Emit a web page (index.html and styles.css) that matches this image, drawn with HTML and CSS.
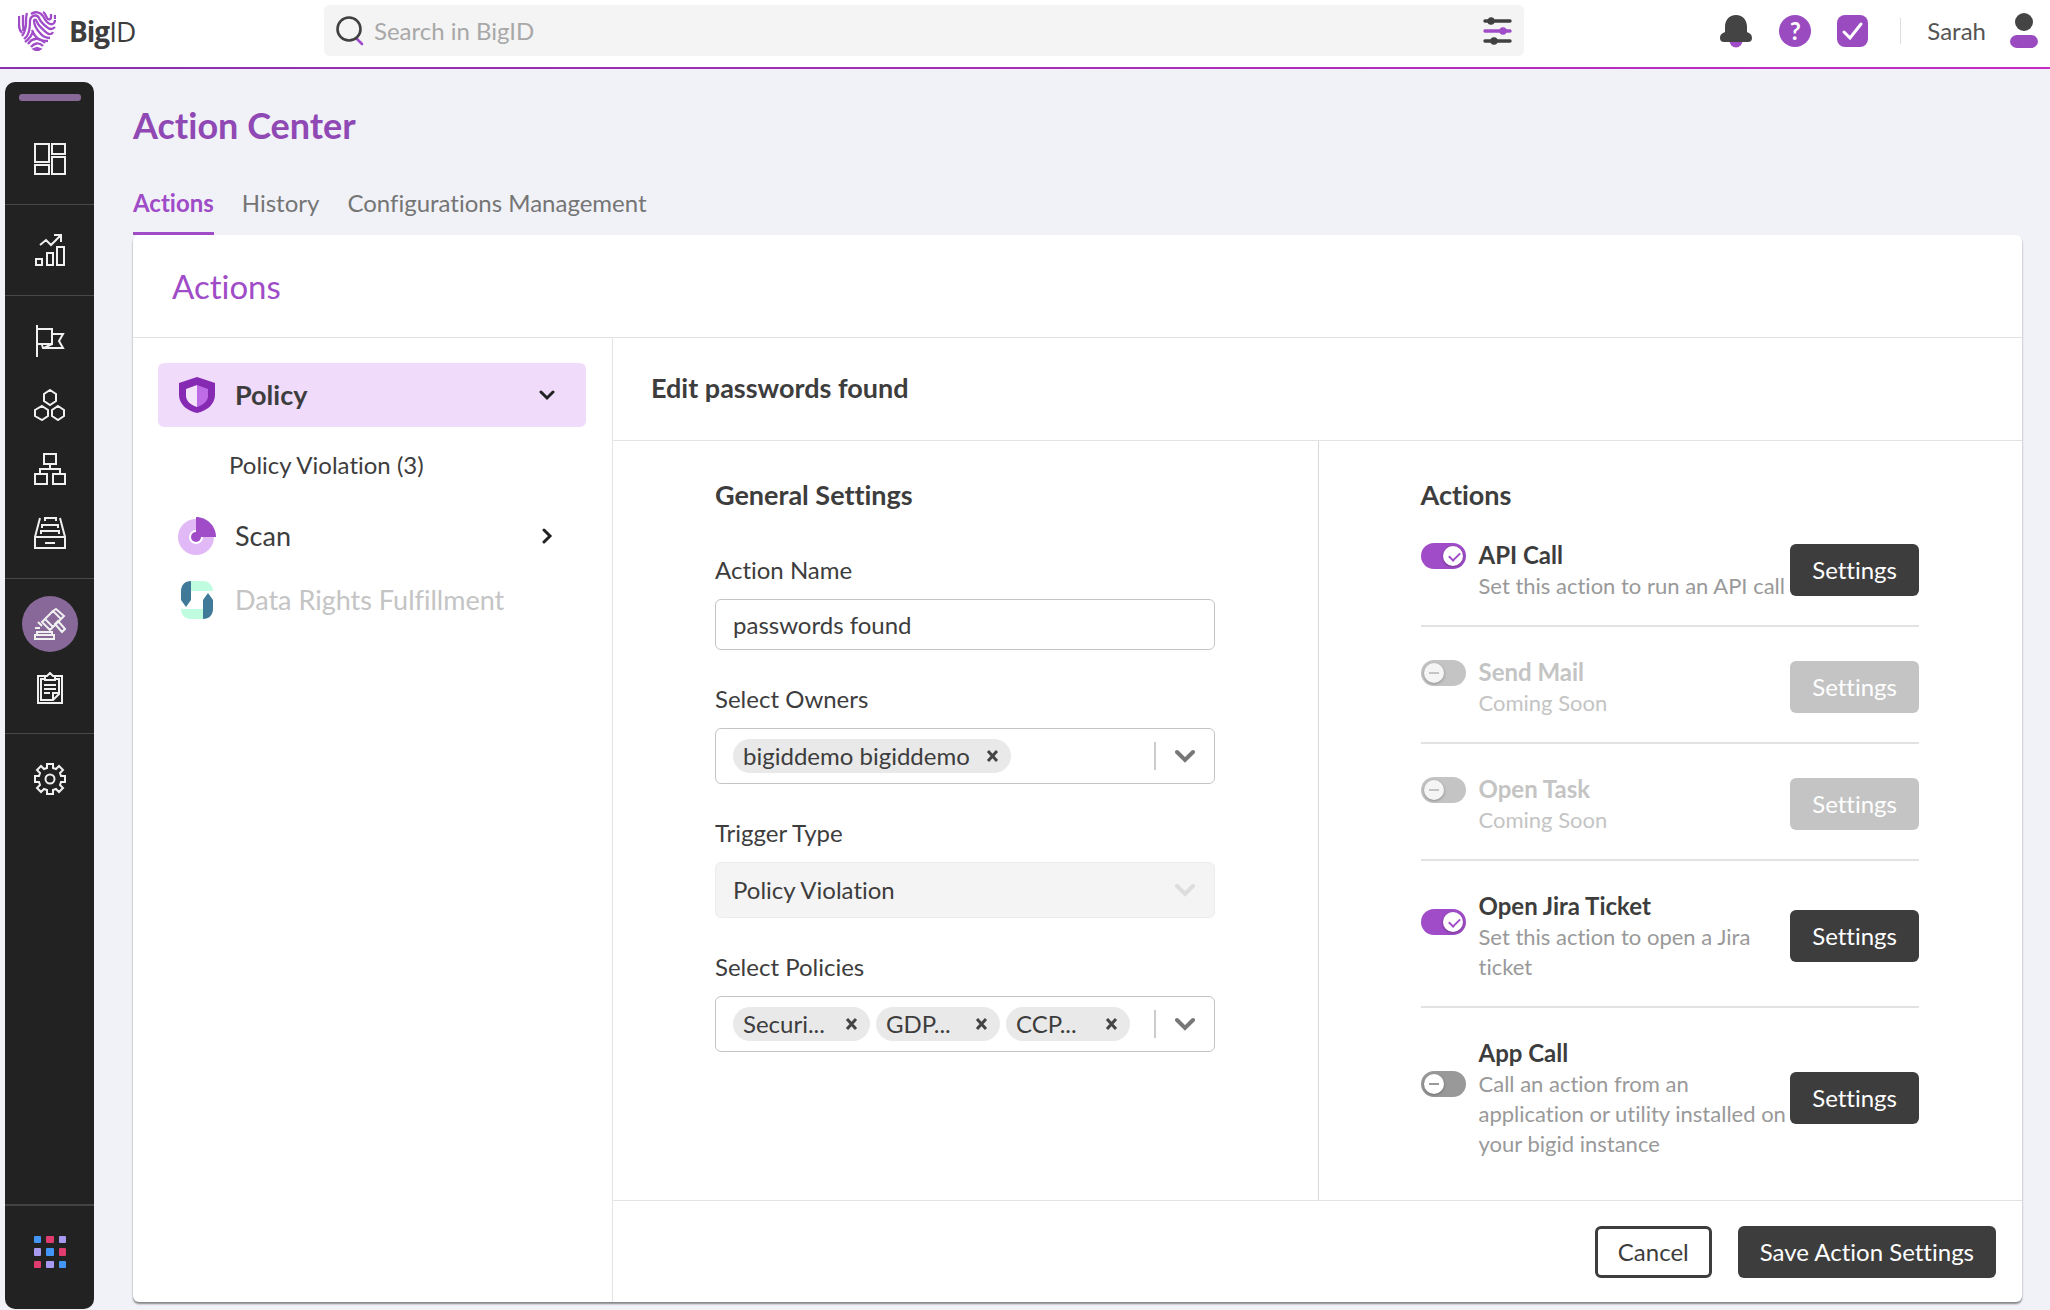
FILE: index.html
```html
<!DOCTYPE html>
<html lang="en">

<head>
    <meta charset="UTF-8">
    <meta name="viewport" content="width=device-width, initial-scale=1.0">
    <title>BigID - Action Center</title>
    <link rel="stylesheet" href="styles.css">
</head>

<body>
<header class="topbar">
    <a class="logo" href="#" aria-label="BigID">
        <svg width="38" height="40" viewBox="0 0 38 40" fill="none" stroke="#a04cc8" stroke-width="2.3">
            <path d="M1 5v9c0 3 1 6 3 8"/>
            <path d="M5 4v9c0 3 1 4 0 7M9 2c-1 3-1 7-1 10 0 5-1 9-4 13"/>
            <path d="M12 9c1-5 7-6 9-2 2 5 5 7 9 10 3 2 5 1 7-1"/>
            <path d="M12 9c0 5 0 10-2 14-1 3-3 4-4 5"/>
            <path d="M13 3c4-3 9-2 12 2 2 4 4 7 7 8 3 1 5-1 5-4"/>
            <path d="M25 1c2 1 3 4 4 6 1 2 4 2 4-1V3M37 4v4"/>
            <path d="M16 11c0-3 2-3 3 0 2 5 7 8 10 11 3 2 5 1 6-1"/>
            <path d="M16 11c1 5 3 8 6 11 3 4 6 5 10 5"/>
            <path d="M14 19c2 5 5 9 9 10 3 1 5 1 7 1M15 20c-1 5-4 8-8 11"/>
            <path d="M10 33c4-6 10-7 17-1M13 36c3-4 8-5 12-1"/>
            <path d="M16 38l3-1 3 1-3 2z" fill="#a04cc8"/>
        </svg>
        <span class="logo-text"><b>Big</b>ID</span>
    </a>
    <div class="search">
        <svg width="28" height="34" viewBox="0 0 28 34" fill="none" stroke-width="2.6" stroke-linecap="round">
            <path d="M20 24l6 6" stroke="#a04cc8"/>
            <circle cx="13" cy="15" r="11.5" stroke="#404040"/>
        </svg>
        <input type="search" placeholder="Search in BigID" aria-label="Search in BigID">
        <button class="icon-btn" aria-label="Filters">
            <svg width="30" height="28" viewBox="0 0 30 28" stroke-width="3.4" stroke-linecap="round">
                <g stroke="#404040" fill="#404040"><path d="M2 4h25M2 24h25"/><circle cx="8" cy="4" r="2"/><circle cx="11" cy="24" r="2"/></g>
                <g stroke="#a04cc8" fill="#a04cc8"><path d="M2 14h25"/><circle cx="20" cy="14" r="2"/></g>
            </svg>
        </button>
    </div>
    <div class="user-area">
        <button class="icon-btn" aria-label="Notifications">
            <svg width="34" height="34" viewBox="0 0 34 34">
                <circle cx="17" cy="27" r="6.5" fill="#a04cc8"/>
                <path d="M17 1c7 0 11 5 11 12v5c2 1 5 2 5 6 0 3-2 4-4 4H5c-2 0-4-1-4-4 0-4 3-5 5-6v-5C6 6 10 1 17 1z" fill="#444"/>
            </svg>
        </button>
        <button class="icon-btn help" aria-label="Help">?</button>
        <button class="icon-btn" aria-label="Tasks">
            <svg width="31" height="32" viewBox="0 0 31 32">
                <rect width="31" height="32" rx="8" fill="#9a4bc0"/>
                <path d="M7 17l6 6L24 9" fill="none" stroke="#fff" stroke-width="3" stroke-linecap="round"/>
            </svg>
        </button>
        <span class="user-name">Sarah</span>
        <svg width="28" height="36" viewBox="0 0 28 36">
            <circle cx="14" cy="9" r="9" fill="#444"/>
            <rect y="22" width="28" height="13" rx="7" fill="#9a4bc0"/>
        </svg>
    </div>
</header>

<div class="page">
    <nav class="sidebar" aria-label="Main menu">
        <span class="handle"></span>
        <div class="nav-group">
            <a href="#" aria-label="Dashboard">
                <svg class="nav-icon" viewBox="0 0 32 32"><path d="M1 1h14v18H1zM18 1h13v10H18zM1 22h14v9H1zM18 14h13v17H18z"/></svg>
            </a>
        </div>
        <div class="nav-group">
            <a href="#" aria-label="Reports">
                <svg class="nav-icon" viewBox="0 0 32 32"><path d="M2 25h6v6H2zM13 19h6v12h-6zM23 13h7v18h-7zM6 11l6-5 5 5L27 1M20 1h7v7"/></svg>
            </a>
        </div>
        <div class="nav-group">
            <a href="#" aria-label="Flags">
                <svg class="nav-icon" viewBox="0 0 32 32"><path d="M3 0v32M3 4h15v15H3M18 9h11l-4 7 4 7H9l-1-3M18 19l-8 4"/></svg>
            </a>
            <a href="#" aria-label="Correlation">
                <svg class="nav-icon" viewBox="0 0 32 32"><path d="M16 1l6 4v7l-6 4-6-4V5zM8 17l6 4v6l-6 4-7-4v-6zM24 17l6 4v6l-6 4-6-4v-6z"/></svg>
            </a>
            <a href="#" aria-label="Data sources">
                <svg class="nav-icon" viewBox="0 0 32 32"><path d="M10 1h12v10H10zM1 21h12v10H1zM19 21h12v10H19zM16 11v5M6 21v-5h20v5"/></svg>
            </a>
            <a href="#" aria-label="Catalog">
                <svg class="nav-icon" viewBox="0 0 32 32"><path d="M6 1L1 20v11h30V20L26 1M1 20h30M11 26h10M11 4V1h11v3M8 11V8h16v3M7 17v-3h18v3"/></svg>
            </a>
        </div>
        <div class="nav-group">
            <a class="current" href="#" aria-label="Action Center">
                <svg class="nav-icon" viewBox="0 0 32 32"><path d="M1 27h19v4H1zM3 24h15v3H3zM19 3l3-2 8 7-3 3zM8 14l3-3 8 8-3 3zM11 11l8-8M19 19l8-8M21 16l3-3 7 8-3 3zM1 20h5M4 14l4 4"/></svg>
            </a>
            <a href="#" aria-label="Tasks list">
                <svg class="nav-icon" viewBox="0 0 32 32"><path d="M11 4H4v27h24V4h-7M11 7H7v21h12l6-6V7h-4M11 4h2l3-3 3 3h2v4H11zM10 13h12M10 17h12M10 21h6M19 27v-6h6"/></svg>
            </a>
        </div>
        <div class="nav-group last">
            <a href="#" aria-label="Settings">
                <svg class="nav-icon" viewBox="0 0 32 32"><path d="M13 1h6v4l3 1 3-3 4 4-3 3 1 3h4v6h-4l-1 3 3 3-4 4-3-3-3 1v4h-6v-4l-3-1-3 3-4-4 3-3-1-3H1v-6h4l1-3-3-3 4-4 3 3 3-1z"/><circle cx="16" cy="16" r="4.5"/></svg>
            </a>
        </div>
        <div class="nav-apps">
            <a href="#" aria-label="Apps">
                <svg width="32" height="32" viewBox="0 0 32 32">
                    <g fill="#4396f5"><rect width="7" height="7" rx="1"/><rect x="12" y="12" width="8" height="8" rx="1"/><rect x="25" y="25" width="7" height="7" rx="1"/></g>
                    <g fill="#e03c70"><rect x="12" width="8" height="7" rx="1"/><rect x="25" y="12" width="7" height="8" rx="1"/><rect y="25" width="7" height="7" rx="1"/></g>
                    <g fill="#a89af0"><rect x="25" width="7" height="7" rx="1"/><rect y="12" width="7" height="8" rx="1"/><rect x="12" y="25" width="8" height="7" rx="1"/></g>
                </svg>
            </a>
        </div>
    </nav>

    <main class="content">
        <h1>Action Center</h1>
        <nav class="tabs" aria-label="Sections">
            <a class="active" href="#">Actions</a>
            <a href="#">History</a>
            <a href="#">Configurations Management</a>
        </nav>

        <div class="card">
            <h2 class="card-title">Actions</h2>
            <div class="card-body">
                <aside class="triggers">
                    <button class="trigger open">
                        <svg width="38" height="36" viewBox="-1 0 38 36">
                            <path d="M18 0l18 6v12c0 9-8 16-18 18C8 34 0 27 0 18V6z" fill="#8629b3"/>
                            <path d="M18 8l-11 4v7c0 5 5 9 11 11z" fill="#f3e4fb"/>
                            <path d="M18 8l11 4v7c0 5-5 9-11 11z" fill="#bd6be6"/>
                        </svg>
                        <span>Policy</span>
                        <svg class="chevron" width="16" height="16" viewBox="0 0 16 16"><path d="M2 5l6 6 6-6"/></svg>
                    </button>
                    <a class="sub-trigger" href="#">Policy Violation (3)</a>
                    <button class="trigger">
                        <svg width="38" height="38" viewBox="0 0 38 38">
                            <circle cx="18" cy="20" r="18" fill="#e2b9f7"/>
                            <circle cx="18" cy="20" r="7" fill="#fff"/>
                            <path d="M18 0c11 0 20 9 20 20H18z" fill="#a04cc8"/>
                            <circle cx="18" cy="20" r="5" fill="#a04cc8"/>
                        </svg>
                        <span>Scan</span>
                        <svg class="chevron" width="16" height="16" viewBox="0 0 16 16"><path d="M5 2l6 6-6 6"/></svg>
                    </button>
                    <button class="trigger" disabled>
                        <svg width="38" height="38" viewBox="-2 0 38 38">
                            <path d="M11 0h12c6 0 10 5 10 10H11z" fill="#c0fce0"/>
                            <path d="M23 38H11C5 38 1 34 1 28h22z" fill="#c0fce0"/>
                            <path d="M11 0v19l-5 7-5-7V10C1 4 5 0 11 0z" fill="#407a98"/>
                            <path d="M23 38V19l5-7 5 7v9c0 6-4 10-10 10z" fill="#407a98"/>
                        </svg>
                        <span>Data Rights Fulfillment</span>
                    </button>
                </aside>

                <section class="editor">
                    <h3 class="editor-title">Edit passwords found</h3>
                    <div class="columns">
                        <form class="column" id="action-form">
                            <h3>General Settings</h3>
                            <div class="field first">
                                <label for="name">Action Name</label>
                                <input class="control" id="name" type="text" value="passwords found">
                            </div>
                            <div class="field">
                                <label for="owners">Select Owners</label>
                                <div class="control multi">
                                    <span class="chip wide">bigiddemo bigiddemo
                                        <button type="button" aria-label="Remove bigiddemo"><svg width="13" height="14" viewBox="0 0 13 14"><path d="M2 2l9 10M11 2L2 12"/></svg></button>
                                    </span>
                                    <button type="button" class="arrow" id="owners" aria-label="Select Owners">
                                        <svg width="20" height="14" viewBox="0 0 20 14"><path d="M2 3l8 8 8-8"/></svg>
                                    </button>
                                </div>
                            </div>
                            <div class="field">
                                <label for="trigger-type">Trigger Type</label>
                                <div class="select-wrap">
                                    <select class="control" id="trigger-type" disabled>
                                        <option>Policy Violation</option>
                                    </select>
                                    <svg width="20" height="14" viewBox="0 0 20 14"><path d="M2 3l8 8 8-8"/></svg>
                                </div>
                            </div>
                            <div class="field">
                                <label for="policies">Select Policies</label>
                                <div class="control multi">
                                    <span class="chip">Securi...
                                        <button type="button" aria-label="Remove Security policy"><svg width="13" height="14" viewBox="0 0 13 14"><path d="M2 2l9 10M11 2L2 12"/></svg></button>
                                    </span>
                                    <span class="chip">GDP...
                                        <button type="button" aria-label="Remove GDPR policy"><svg width="13" height="14" viewBox="0 0 13 14"><path d="M2 2l9 10M11 2L2 12"/></svg></button>
                                    </span>
                                    <span class="chip">CCP...
                                        <button type="button" aria-label="Remove CCPA policy"><svg width="13" height="14" viewBox="0 0 13 14"><path d="M2 2l9 10M11 2L2 12"/></svg></button>
                                    </span>
                                    <button type="button" class="arrow" id="policies" aria-label="Select Policies">
                                        <svg width="20" height="14" viewBox="0 0 20 14"><path d="M2 3l8 8 8-8"/></svg>
                                    </button>
                                </div>
                            </div>
                        </form>

                        <div class="column">
                            <h3>Actions</h3>
                            <ul class="action-list">
                                <li>
                                    <input class="toggle" type="checkbox" id="api" checked>
                                    <div class="info">
                                        <label for="api">API Call</label>
                                        <p>Set this action to run an API call</p>
                                    </div>
                                    <button class="btn">Settings</button>
                                </li>
                                <li class="off">
                                    <input class="toggle" type="checkbox" id="mail" disabled>
                                    <div class="info">
                                        <label for="mail">Send Mail</label>
                                        <p>Coming Soon</p>
                                    </div>
                                    <button class="btn" disabled>Settings</button>
                                </li>
                                <li class="off">
                                    <input class="toggle" type="checkbox" id="task" disabled>
                                    <div class="info">
                                        <label for="task">Open Task</label>
                                        <p>Coming Soon</p>
                                    </div>
                                    <button class="btn" disabled>Settings</button>
                                </li>
                                <li>
                                    <input class="toggle" type="checkbox" id="jira" checked>
                                    <div class="info">
                                        <label for="jira">Open Jira Ticket</label>
                                        <p>Set this action to open a Jira ticket</p>
                                    </div>
                                    <button class="btn">Settings</button>
                                </li>
                                <li>
                                    <input class="toggle" type="checkbox" id="app">
                                    <div class="info">
                                        <label for="app">App Call</label>
                                        <p>Call an action from an application or utility installed on your bigid instance</p>
                                    </div>
                                    <button class="btn">Settings</button>
                                </li>
                            </ul>
                        </div>
                    </div>
                    <footer class="editor-footer">
                        <button class="btn outline">Cancel</button>
                        <button class="btn" form="action-form">Save Action Settings</button>
                    </footer>
                </section>
            </div>
        </div>
    </main>
</div>
</body>

</html>
```
FILE: styles.css
```css
* {
    box-sizing: border-box;
}

body {
    margin: 0;
    min-height: 100vh;
    display: flex;
    flex-direction: column;
    background: #f1f2f7;
    color: #3d3d3d;
    font-family: Lato, "Open Sans", sans-serif;
    font-size: 24px;
    line-height: 30px;
    font-variant-ligatures: none;
}

h1, h2, h3, p, ul {
    margin: 0;
    padding: 0;
}

a {
    color: inherit;
    text-decoration: none;
}

button, input, select {
    font: inherit;
    font-variant-ligatures: none;
    color: inherit;
}

button {
    border: 0;
    padding: 0;
    background: none;
}

svg {
    flex: none;
    display: block;
}

/* top bar */
.topbar {
    display: flex;
    align-items: center;
    height: 69px;
    padding: 0 12px 6px 18px;
    background: #fff;
    border-bottom: 2px solid;
    border-image: linear-gradient(to right, #8a2fae, #c42cc4) 1;
}

.logo {
    display: flex;
    align-items: center;
    gap: 13px;
    width: 306px;
}

.logo-text {
    font-family: "Open Sans", sans-serif;
    font-size: 28px;
    letter-spacing: -1px;
}

.search {
    display: flex;
    align-items: center;
    gap: 10px;
    flex: 0 1 1200px;
    height: 51px;
    padding: 0 11px 0 12px;
    border-radius: 6px;
    background: #f4f4f4;
}

.search input {
    flex: 1;
    min-width: 0;
    padding: 0;
    border: 0;
    outline: 0;
    background: none;
}

.search input::placeholder {
    color: #a8a8a8;
}

.icon-btn {
    flex: none;
}

.user-area {
    display: flex;
    align-items: center;
    gap: 26px;
    margin-left: auto;
}

.help {
    width: 32px;
    height: 32px;
    border-radius: 50%;
    background: #9a4bc0;
    color: #fff;
    font-weight: bold;
}

.user-name {
    margin-left: 6px;
    padding-left: 26px;
    border-left: 1px solid #ddd;
    line-height: 26px;
    color: #555;
}

.user-name + svg {
    margin-left: -2px;
}

/* side menu */
.page {
    flex: 1;
    display: flex;
}

.sidebar {
    flex: none;
    display: flex;
    flex-direction: column;
    width: 89px;
    margin: 13px 0 1px 5px;
    padding-top: 12px;
    border-radius: 10px;
    background: #222;
}

.handle {
    width: 62px;
    height: 7px;
    margin: 0 auto 13px;
    border-radius: 3px;
    background: #876898;
}

.nav-group {
    padding: 13px 0;
    border-bottom: 1px solid #484848;
}

.nav-group.last {
    border-bottom: 0;
}

.nav-group a {
    display: flex;
    align-items: center;
    justify-content: center;
    height: 64px;
}

.nav-group .current {
    width: 56px;
    height: 56px;
    margin: 4px auto;
    border-radius: 50%;
    background: #876898;
}

.nav-icon {
    width: 32px;
    height: 32px;
    fill: none;
    stroke: #f0f0f0;
    stroke-width: 2;
}

.nav-apps {
    display: flex;
    justify-content: center;
    margin-top: auto;
    padding: 30px 0 41px;
    border-top: 2px solid #444;
}

/* content */
.content {
    flex: 1;
    min-width: 0;
    display: flex;
    flex-direction: column;
    padding: 36px 28px 8px 39px;
}

h1 {
    font-size: 36px;
    line-height: 40px;
    color: #8f48b4;
}

.tabs {
    display: flex;
    gap: 28px;
    margin-top: 43px;
    color: #757575;
}

.tabs a {
    padding-bottom: 14px;
    border-bottom: 3px solid transparent;
}

.tabs .active {
    font-weight: bold;
    color: #a04cc8;
    border-color: #a04cc8;
}

.card {
    flex: 1;
    display: flex;
    flex-direction: column;
    border-radius: 6px;
    background: #fff;
    box-shadow: 0 2px 2px rgba(0, 0, 0, 0.45);
}

.card-title {
    padding: 31px 39px;
    border-bottom: 1px solid #e3e3e3;
    font-size: 33px;
    font-weight: normal;
    line-height: 40px;
    color: #a04cc8;
}

.card-body {
    flex: 1;
    display: grid;
    grid-template-columns: 480px 1fr;
}

.triggers {
    padding: 25px 26px 25px 25px;
    border-right: 1px solid #e3e3e3;
}

.trigger {
    display: grid;
    grid-template-columns: 38px 1fr 16px;
    gap: 19px;
    align-items: center;
    justify-items: start;
    width: 100%;
    height: 64px;
    padding: 0 31px 0 20px;
    border-radius: 6px;
    font-size: 27px;
}

.trigger.open {
    background: #f0dbfb;
    font-weight: bold;
}

.trigger:disabled {
    color: #c4c4c4;
}

.chevron {
    fill: none;
    stroke: #222;
    stroke-width: 3;
    stroke-linecap: round;
}

.sub-trigger {
    display: block;
    padding: 23px 0 24px 71px;
}

.editor {
    display: flex;
    flex-direction: column;
}

h3 {
    font-size: 27px;
}

.editor-title {
    padding: 35px 38px 37px;
    border-bottom: 1px solid #e3e3e3;
}

.columns {
    flex: 1;
    display: grid;
    grid-template-columns: 1fr 1fr;
}

.column {
    padding: 39px 103px 0 102px;
}

.column + .column {
    border-left: 1px solid #d8d8d8;
}

/* form */
.field {
    margin-top: 34px;
}

.field.first {
    margin-top: 45px;
}

.field label {
    display: block;
    margin-bottom: 14px;
}

.control {
    display: block;
    width: 100%;
    height: 56px;
    padding: 0 17px;
    border: 1px solid #c4c4c4;
    border-radius: 6px;
    background: #fff;
}

input.control {
    height: 51px;
}

.multi {
    display: flex;
    align-items: center;
    gap: 6px;
    padding-right: 0;
}

.chip {
    display: flex;
    align-items: center;
    justify-content: space-between;
    gap: 20px;
    min-width: 124px;
    height: 34px;
    padding: 0 12px 0 10px;
    border-radius: 17px;
    background: #e9e9e9;
}

.chip.wide {
    gap: 16px;
}

.chip svg {
    fill: none;
    stroke: #444;
    stroke-width: 3;
}

.arrow {
    display: flex;
    align-items: center;
    justify-content: center;
    width: 60px;
    height: 28px;
    margin-left: auto;
    border-left: 2px solid #ccc;
}

.arrow svg, .select-wrap svg {
    fill: none;
    stroke: #777;
    stroke-width: 4;
    stroke-linecap: round;
}

.select-wrap {
    position: relative;
}

.select-wrap svg {
    position: absolute;
    right: 20px;
    top: 21px;
    stroke: #ddd;
}

select.control {
    appearance: none;
    border-color: #ececec;
    background: #f4f4f4;
    opacity: 1;
}

/* actions */
.action-list {
    list-style: none;
}

.action-list li {
    display: flex;
    align-items: center;
    padding: 29px 0 24px;
    border-bottom: 2px solid #e2e2e2;
}

.action-list li:last-child {
    border-bottom: 0;
}

.toggle {
    appearance: none;
    flex: none;
    position: relative;
    width: 45px;
    height: 26px;
    margin: 0 13px 28px 0;
    border-radius: 13px;
    background: #999;
}

.toggle::before {
    content: "";
    position: absolute;
    left: 3px;
    top: 3px;
    width: 20px;
    height: 20px;
    border-radius: 50%;
    background: #fff;
    box-shadow: 0 1px 3px rgba(0, 0, 0, 0.3);
}

.toggle::after {
    content: "";
    position: absolute;
    left: 8px;
    top: 12px;
    width: 10px;
    height: 2px;
    background: #999;
}

.toggle:checked {
    background: #a04cc8;
}

.toggle:checked::before {
    left: 22px;
}

.toggle:checked::after {
    left: 28px;
    top: 9px;
    width: 9px;
    height: 5px;
    border: solid #a04cc8;
    border-width: 0 0 2px 2px;
    background: none;
    transform: rotate(-45deg);
}

.toggle:disabled {
    background: #c4c4c4;
}

.toggle:disabled::before {
    background: #f5f5f5;
}

.toggle:disabled::after {
    background: #c4c4c4;
}

.info {
    flex: 1;
}

.info label {
    display: block;
    line-height: 32px;
    font-weight: bold;
}

.info p {
    font-size: 22px;
    color: #999;
}

.off .info, .off p {
    color: #c4c4c4;
}

.btn {
    flex: none;
    height: 52px;
    padding: 0 22px;
    border-radius: 6px;
    background: #3d3d3d;
    color: #fff;
}

.btn:disabled {
    background: #c4c4c4;
}

.btn.outline {
    padding: 0 20px;
    border: 3px solid #3d3d3d;
    background: #fff;
    color: #3d3d3d;
}

.editor-footer {
    display: flex;
    justify-content: flex-end;
    gap: 26px;
    padding: 25px 26px 24px;
    border-top: 1px solid #e3e3e3;
}
```
